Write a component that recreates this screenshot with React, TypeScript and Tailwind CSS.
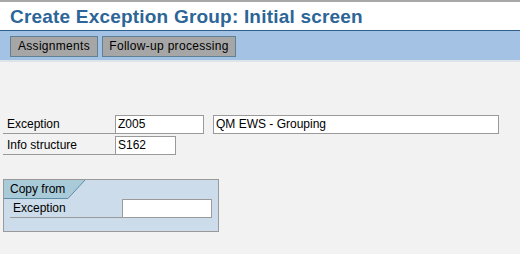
export default function App() {
  return (
    <div className="w-[520px] h-[254px] bg-[#f2f2f2] overflow-hidden font-['Liberation_Sans',Arial,sans-serif] text-[12px] text-black">
      <div className="h-[2px] bg-[#a8a8a8]" />
      <div className="h-[28px] bg-white pl-[10px] flex items-center">
        <h1 className="text-[19px] font-bold text-[#2d6597] leading-none tracking-[0.2px]">
          Create Exception Group: Initial screen
        </h1>
      </div>
      <div className="h-px bg-[#2f5f8c]" />
      <div className="h-[29px] bg-[#a4c2e4] flex items-center gap-[4px] pl-[10px] pt-[1px]">
        <button className="w-[88px] h-[21px] bg-[#a6a6a6] border border-[#5f8196] leading-none tracking-[0.3px]">
          Assignments
        </button>
        <button className="w-[134px] h-[21px] bg-[#a6a6a6] border border-[#5f8196] leading-none tracking-[0.3px]">
          Follow-up processing
        </button>
      </div>
      <div className="h-[2px] bg-[#dde3e8]" />

      <div className="pt-[53px] pl-[3px] flex flex-col gap-[2px]">
        <div className="flex items-end">
          <div className="w-[112px] h-[19px] border-b border-[#9a9a9a] pl-[4px] leading-[18px]">Exception</div>
          <div className="w-[89px] h-[19px] bg-white border border-[#9a9a9a] pl-[2px] leading-[16px]">Z005</div>
          <div className="w-[286px] h-[19px] ml-[9px] bg-white border border-[#9a9a9a] pl-[2px] leading-[16px]">
            QM EWS - Grouping
          </div>
        </div>
        <div className="flex items-end">
          <div className="w-[112px] h-[19px] border-b border-[#9a9a9a] pl-[4px] leading-[18px]">Info structure</div>
          <div className="w-[61px] h-[19px] bg-white border border-[#9a9a9a] pl-[2px] leading-[16px]">S162</div>
        </div>
      </div>

      <div className="mt-[24px] ml-[3px] w-[216px] h-[53px] bg-[#cddcea] border border-[#9a9a9a]">
        <div className="relative w-[81px] h-[19px]">
          <svg className="absolute inset-0" width="81" height="19" viewBox="0 0 81 19">
            <polygon points="0,0 81,0 64,18.5 0,18.5" fill="#a9cbd9" />
            <polyline points="0,18.5 64,18.5 81,0" fill="none" stroke="#5e8ea6" strokeWidth="1" />
          </svg>
          <span className="relative pl-[6px] leading-[18px]">Copy from</span>
        </div>
        <div className="flex items-end pl-[6px]">
          <div className="w-[112px] h-[19px] border-b border-[#9a9a9a] pl-[3px] leading-[18px]">Exception</div>
          <div className="w-[90px] h-[19px] bg-white border border-[#9a9a9a]" />
        </div>
      </div>
    </div>
  );
}
